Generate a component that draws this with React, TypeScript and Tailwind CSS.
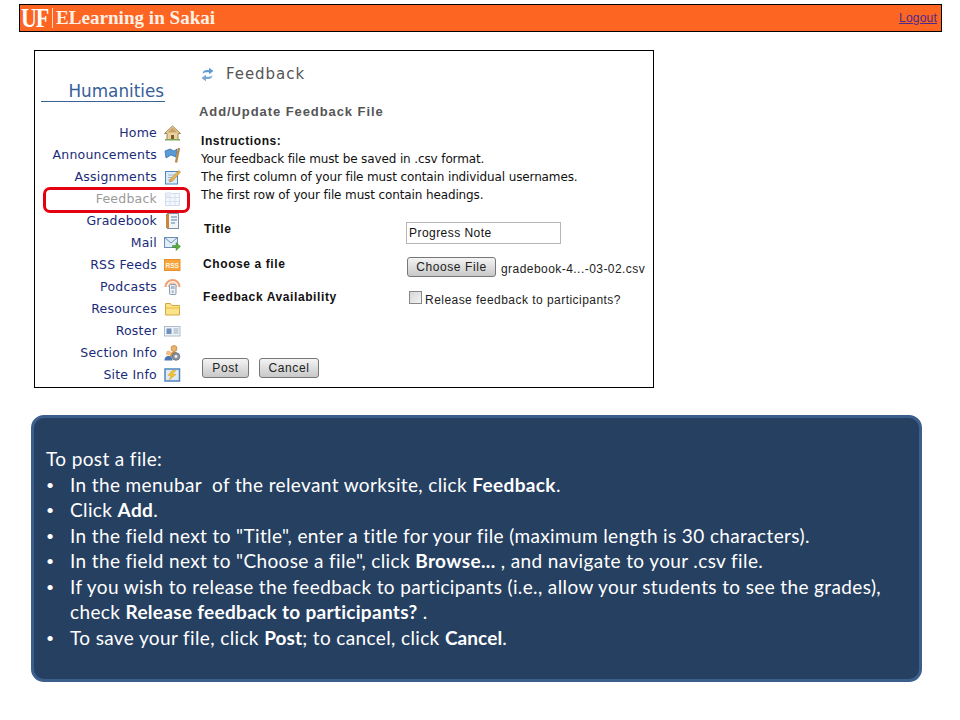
import React from "react";

const Home = () => (
  <svg width="17" height="16" viewBox="0 0 17 16">
    <path d="M8.5 1 16.5 8.5 14 8.5 14 14.5 3 14.5 3 8.5 .5 8.5Z" fill="#e8d3a0" stroke="#a5824d" strokeWidth="1" />
    <path d="M8.5 2.5 3.5 7.5 13.5 7.5Z" fill="#c9a266" />
    <rect x="7" y="10" width="3" height="4.500" fill="#7f5a2b" />
    <rect x="1" y="14" width="15" height="1.500" fill="#7fa65a" />
  </svg>
);
const Announce = () => (
  <svg width="17" height="16" viewBox="0 0 17 16">
    <path d="M1 4 6 2 10 4 13 2 12 10 7 8 2 11Z" fill="#5b9bd5" stroke="#2f6aa8" strokeWidth=".7" />
    <path d="M15 1 12 15.500" stroke="#b98a4a" strokeWidth="2.400" />
  </svg>
);
const Assign = () => (
  <svg width="17" height="16" viewBox="0 0 17 16">
    <rect x="1.500" y="2.500" width="12" height="12.500" fill="#dcebf8" stroke="#4f86bd" />
    <path d="M4 6h7M4 8.500h5M4 11h4" stroke="#9db8d2" />
    <path d="M15 1.500 16.500 3 8.500 12 5.500 13 6.500 10Z" fill="#eeb64a" stroke="#a87c2a" strokeWidth=".6" />
  </svg>
);
const FeedbackIcon = () => (
  <svg width="17" height="16" viewBox="0 0 17 16" opacity=".42">
    <rect x="1.500" y="2.500" width="14" height="12" fill="#e5eef8" stroke="#8fb0d4" />
    <path d="M1.500 6.500h14M1.500 10.500h14M6 2.500v12M11 2.500v12" stroke="#9dbbdc" />
    <rect x="2" y="1" width="5" height="5" fill="#c8d4e2" />
  </svg>
);
const Grade = () => (
  <svg width="17" height="16" viewBox="0 0 17 16">
    <rect x="3.500" y=".5" width="11" height="15" fill="#f2f5f8" stroke="#7f8ea0" />
    <rect x="2" y="1" width="3" height="14" fill="#c9863f" />
    <path d="M7 4h6M7 7h6M7 10h4" stroke="#5d7fa8" strokeWidth="1.200" />
  </svg>
);
const Mail = () => (
  <svg width="17" height="16" viewBox="0 0 17 16">
    <rect x=".5" y="2.500" width="13" height="10" fill="#e2edf7" stroke="#6a8fb5" />
    <path d="M.5 2.500 7 8l6.500-5.500" fill="none" stroke="#6a8fb5" />
    <path d="M8.500 10.500h3.500v-3l4.500 4-4.500 4v-3H8.500Z" fill="#5cae3c" stroke="#37802a" strokeWidth=".5" />
  </svg>
);
const Rss = () => (
  <svg width="17" height="16" viewBox="0 0 17 16">
    <rect x=".5" y="2.500" width="15.500" height="11" fill="#f6a53f" stroke="#ea9028" />
    <text x="8.250" y="10.500" textAnchor="middle" fontSize="6.500" fontWeight="700" fontFamily="Liberation Sans, sans-serif" fill="#fff3df">RSS</text>
  </svg>
);
const Podcast = () => (
  <svg width="17" height="16" viewBox="0 0 17 16">
    <path d="M1.500 8a7 7 0 0 1 14 0" fill="none" stroke="#f0a070" strokeWidth="2" />
    <path d="M4.500 8a4 4 0 0 1 8 0" fill="none" stroke="#f5bd95" strokeWidth="1.500" />
    <rect x="5.500" y="5.500" width="6.500" height="10" rx="1" fill="#e9eef3" stroke="#8b9bad" />
    <rect x="7" y="7" width="3.500" height="3" fill="#a9bacb" />
    <circle cx="8.700" cy="12.700" r="1.200" fill="#a9bacb" />
  </svg>
);
const Folder = () => (
  <svg width="17" height="16" viewBox="0 0 17 16">
    <path d="M1.500 2.500h5l1.500 2h7.500v9.500H1.500Z" fill="#fbe38a" stroke="#d4a945" />
    <path d="M2 7h13.500" stroke="#f3c857" strokeWidth="1.500" />
  </svg>
);
const Roster = () => (
  <svg width="17" height="16" viewBox="0 0 17 16">
    <rect x=".5" y="3.500" width="15.500" height="9.500" fill="#eef3f8" stroke="#aebccb" />
    <rect x="2.500" y="5.500" width="5" height="5.500" fill="#6f90b8" />
    <path d="M9.500 6h5M9.500 8h5M9.500 10h5" stroke="#98a9bb" />
  </svg>
);
const Section = () => (
  <svg width="17" height="16" viewBox="0 0 17 16">
    <circle cx="10" cy="3.500" r="3" fill="#eeb36b" stroke="#a8743a" strokeWidth=".6" />
    <path d="M6 12c0-4 2-5.500 4-5.500s4 1.500 4 5.500Z" fill="#d98f3e" />
    <circle cx="4.500" cy="8" r="2.500" fill="#eec08a" />
    <path d="M.5 15.500c0-3.500 2-4.500 4-4.500s4 1 4 4.500Z" fill="#4a76b5" />
    <circle cx="12" cy="11.500" r="3.800" fill="#8a96a3" stroke="#59636e" strokeWidth=".7" />
    <circle cx="12" cy="11.500" r="1.400" fill="#eef1f4" />
  </svg>
);
const Site = () => (
  <svg width="17" height="16" viewBox="0 0 17 16">
    <rect x="1" y="2" width="14.500" height="12" fill="#dfeaf6" stroke="#4f86bd" strokeWidth="1.500" />
    <path d="M12 3.500 8.500 7 12 7.500 5 13 7 9 4 8.500 8 3.500Z" fill="#f2c230" stroke="#c6951b" strokeWidth=".4" />
  </svg>
);

const nav: [string, React.FC, string?][] = [
  ["Home", Home],
  ["Announcements", Announce],
  ["Assignments", Assign],
  ["Feedback", FeedbackIcon, "muted"],
  ["Gradebook", Grade],
  ["Mail", Mail],
  ["RSS Feeds", Rss],
  ["Podcasts", Podcast],
  ["Resources", Folder],
  ["Roster", Roster],
  ["Section Info", Section],
  ["Site Info", Site],
];

const btn =
  "h-[20px] rounded-[3px] border border-[#777] bg-gradient-to-b from-[#f4f4f4] to-[#c8c8c8] font-['Liberation_Sans',sans-serif] text-[12px] tracking-[0.6px] text-[#222] flex items-center justify-center";

const Bullet = ({ children }: { children: React.ReactNode }) => (
  <li className="flex">
    <span className="w-[24px] shrink-0 text-[14px]">•</span>
    <span>{children}</span>
  </li>
);

export default function App() {
  return (
    <div className="w-[960px] h-[720px] bg-white overflow-hidden pt-[4px]">
      {/* Banner */}
      <header className="ml-[19px] w-[923px] h-[28px] border border-black bg-[#fd6522] flex items-center justify-between pl-[1px] pr-[4px]">
        <div className="flex items-center text-white font-['Liberation_Serif',serif] font-bold">
          <span className="text-[27px] leading-none tracking-[-1.500px] w-[30px] scale-x-[0.82] origin-left">UF</span>
          <span className="w-px h-[20px] bg-[#ffd9c4] ml-[1px] mr-[3px]" />
          <span className="text-[19.100px] leading-none text-[#fff1e6]">ELearning in Sakai</span>
        </div>
        <a className="font-['Liberation_Sans',sans-serif] text-[12px] tracking-[0.2px] underline text-[#4b2a8c]">Logout</a>
      </header>

      {/* Screenshot */}
      <section className="ml-[34px] mt-[18px] w-[620px] h-[338px] border border-black flex font-['DejaVu_Sans',sans-serif]">
        <aside className="w-[140px] shrink-0 ml-[6px] relative">
          <div className="mt-[18px] h-[33px] border-b border-[#3a6296] w-[124px] flex items-end justify-end pr-[1px] text-[16.800px] leading-[19px] text-[#35609a]">
            Humanities
          </div>
          <ul className="mt-[20px]">
            {nav.map(([label, Icon, muted]) => (
              <li key={label} className="h-[22px] flex items-center justify-end">
                <span className={`text-[12.500px] tracking-[0.22px] whitespace-nowrap ${muted ? "text-[#9a9a9a]" : "text-[#1a2b78]"}`}>
                  {label}
                </span>
                <span className="ml-[7px] w-[17px] shrink-0 flex"><Icon /></span>
              </li>
            ))}
          </ul>
          <div className="absolute left-[2px] top-[136px] w-[147px] h-[26px] border-[3px] border-[#e3000f] rounded-[7px]" />
        </aside>

        <main className="flex-1 ml-[19px] text-[#222]">
          <div className="flex items-center mt-[13px] h-[20px] pl-[1px]">
            <svg width="13" height="15" viewBox="0 0 13 15">
              <path d="M1.500 6.500C2 3.500 4.500 2.500 8 3V.8L12.500 4 8 7.200V5.300C5 5 3.500 5.500 1.500 6.500Z" fill="#5f9bd0" />
              <path d="M11.500 8.500C11 11.500 8.500 12.500 5 12V14.200L.5 11 5 7.800V9.700C8 10 9.500 9.500 11.500 8.500Z" fill="#7aa8d4" />
            </svg>
            <h1 className="ml-[12px] text-[15px] tracking-[0.95px] text-[#555] leading-none">Feedback</h1>
          </div>
          <h2 className="mt-[20px] -ml-[1px] font-['Liberation_Sans',sans-serif] font-bold text-[13px] tracking-[0.92px] text-[#555] leading-[16px]">
            Add/Update Feedback File
          </h2>
          <div className="mt-[12px] ml-[1px] text-[12px] leading-[18px] tracking-[-0.12px] text-[#111] whitespace-nowrap">
            <p className="font-['Liberation_Sans',sans-serif] font-bold tracking-[0.6px]">Instructions:</p>
            <p>Your feedback file must be saved in .csv format.</p>
            <p>The first column of your file must contain individual usernames.</p>
            <p>The first row of your file must contain headings.</p>
          </div>
          <div className="mt-[18px] ml-[4px] font-['Liberation_Sans',sans-serif] text-[12px] text-[#222]">
            <div className="flex items-center h-[22px]">
              <b className="w-[202px] tracking-[0.6px] text-[#111] -mt-[8px]">Title</b>
              <input
                readOnly
                value="Progress Note"
                className="w-[155px] h-[22px] border border-[#b5b5b5] pl-[2px] outline-none text-[12px] tracking-[0.45px] text-[#111]"
              />
            </div>
            <div className="flex items-center h-[20px] mt-[13px]">
              <b className="w-[204px] -ml-[1px] tracking-[0.6px] text-[#111] -mt-[6px]">Choose a file</b>
              <div className={`${btn} w-[89px]`}>Choose File</div>
              <span className="ml-[5px] text-[12px] tracking-[0.45px] pt-[3px] whitespace-nowrap">gradebook-4...-03-02.csv</span>
            </div>
            <div className="flex items-center h-[20px] mt-[11px]">
              <b className="w-[206px] -ml-[1px] tracking-[0.6px] text-[#111] -mt-[2px]">Feedback Availability</b>
              <span className="w-[13px] h-[13px] border border-[#888] bg-gradient-to-br from-[#d6d6d6] to-[#f4f4f4] shrink-0 -mt-[2px]" />
              <span className="ml-[3px] text-[12px] tracking-[0.46px] whitespace-nowrap pt-[3px]">Release feedback to participants?</span>
            </div>
            <div className="flex gap-[10px] mt-[50px] -ml-[2px]">
              <div className={`${btn} w-[47px]`}>Post</div>
              <div className={`${btn} w-[60px]`}>Cancel</div>
            </div>
          </div>
        </main>
      </section>

      {/* Notes */}
      <section className="ml-[31px] mt-[27px] w-[891px] h-[267px] rounded-[13px] border-[3px] border-[#3b5e8c] bg-[#264061] pt-[28px] pl-[12px] pr-[20px] font-['Lato',sans-serif] text-[19px] tracking-[0.37px] leading-[25.500px] text-white">
        <p>To post a file:</p>
        <ul>
          <Bullet><span>In the menubar&nbsp; of the relevant worksite, click <b>Feedback</b>.</span></Bullet>
          <Bullet><span>Click <b>Add</b>.</span></Bullet>
          <Bullet>In the field next to "Title", enter a title for your file (maximum length is 30 characters).</Bullet>
          <Bullet><span>In the field next to "Choose a file", click <b>Browse...</b> , and navigate to your .csv file.</span></Bullet>
          <Bullet><span>If you wish to release the feedback to participants (i.e., allow your students to see the grades), check <b className="tracking-[0.3px]">Release feedback to participants?</b> .</span></Bullet>
          <Bullet><span>To save your file, click <b className="tracking-[0.1px]">Post</b>; to cancel, click <b className="tracking-[0.1px]">Cancel</b>.</span></Bullet>
        </ul>
      </section>
    </div>
  );
}
